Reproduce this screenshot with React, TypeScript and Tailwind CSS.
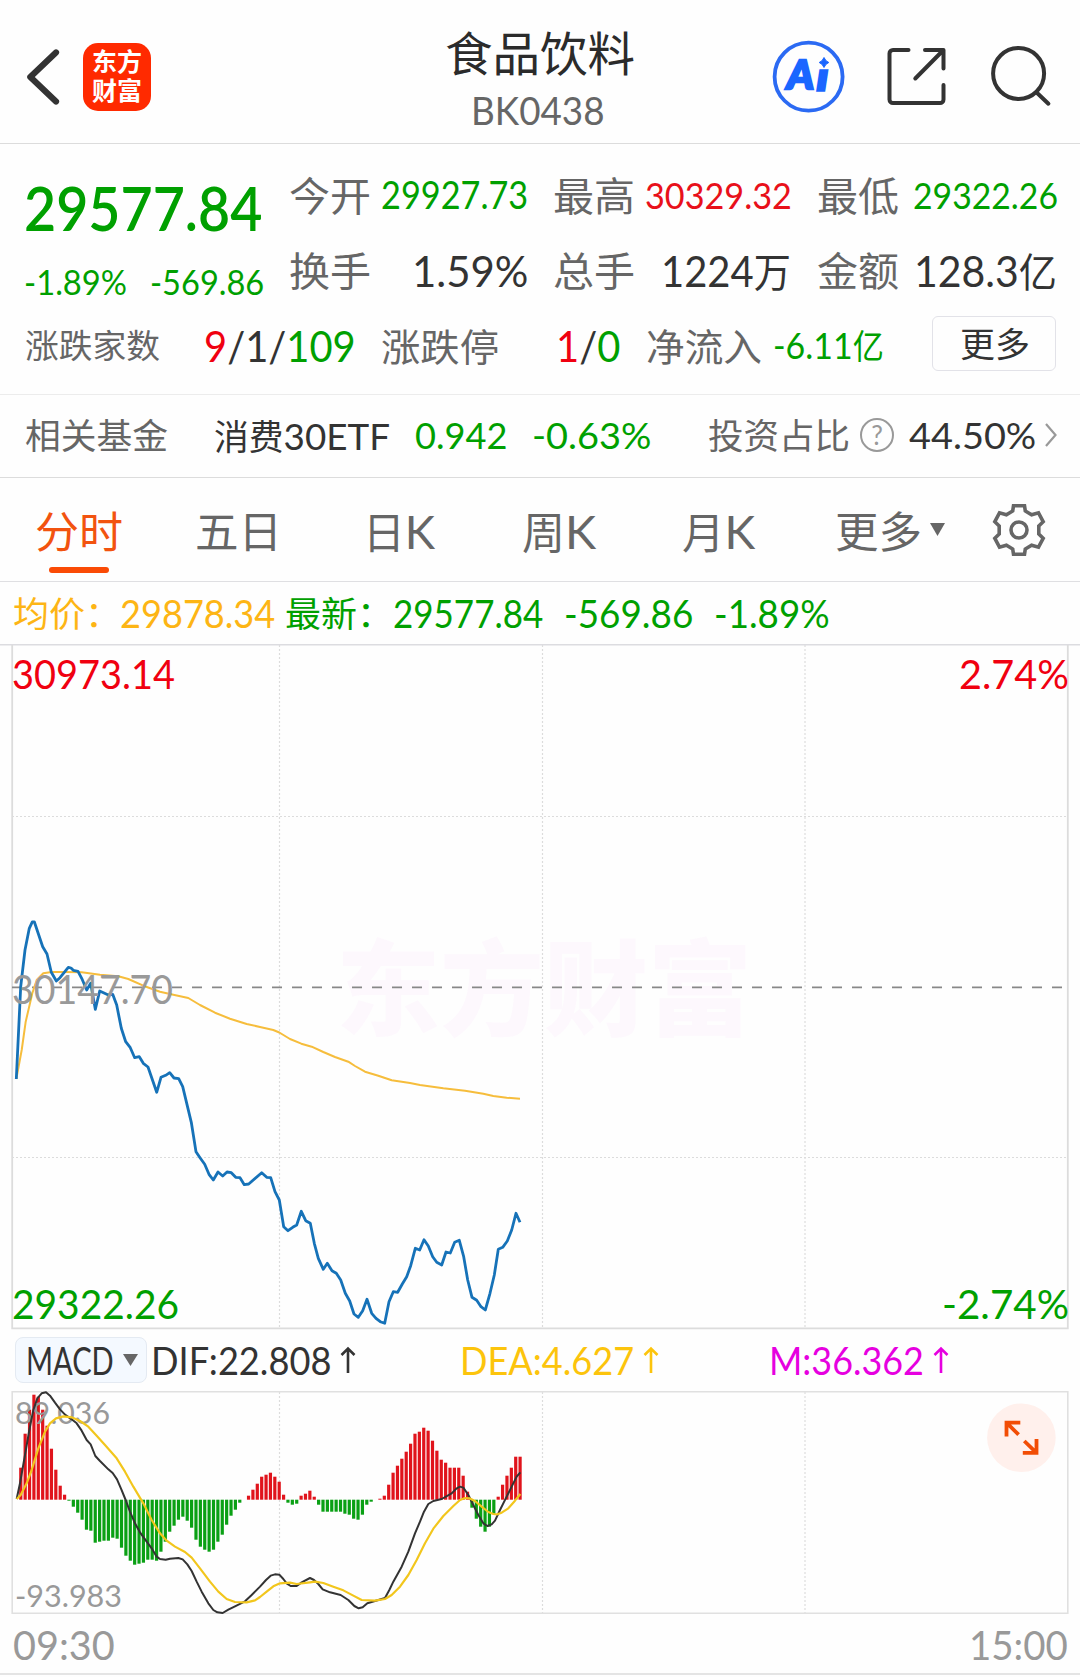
import { useLayoutEffect, useRef, useState } from 'react'
import type { ReactNode } from 'react'

// one value per minute bar, positive = red, negative = green
const macdBars = [
    0, 32, 66, 90, 105, 103, 90, 74, 51, 30, 14, 5, -1, -7, -13, -20, -30, -31, -43, -42, -41, -41, -38, -39,
    -48, -56, -61, -65, -64, -63, -60, -60, -61, -52, -42, -32, -26, -20, -17, -21, -28, -40, -47, -50, -52,
    -50, -42, -35, -25, -16, -10, -3, 0, 4, 10, 16, 23, 25, 27, 23, 18, 5, -3, -5, -4, 4, 6, 9, 3, -5, -12,
    -12, -12, -12, -12, -14, -15, -19, -20, -15, -5, -2, 0, 1, 4, 15, 27, 34, 41, 48, 56, 66, 68, 72, 69, 59,
    49, 40, 37, 32, 32, 32, 24, 8, -8, -19, -27, -32, -27, -14, 3, 15, 24, 32, 43, 43,
]

const priceLine =
    '16.3,1079 20.7,986.7 25,950 29.3,928.3 32.3,921.8 34.3,921.8 42.7,946.7 47,954 51.3,972.3 56.3,981 60,977.7 68.3,967.3 71,968 73.3,970.3 78,971.3 81.7,978.3 86.7,990 90.7,983.3 95.3,1009.3 99.7,991 108.3,995 112.7,994.3 116.7,1005 121.3,1028.3 125.7,1041.7 130.3,1047.7 134.7,1057.7 139.3,1056.7 143.3,1063.3 148,1067 156.7,1092.3 161,1077.3 165.7,1075.3 169.7,1072.7 174,1078 178.7,1078.7 182.7,1086.7 191.3,1122.3 196,1151.7 200,1157.7 204.7,1164.3 209,1174.3 213.3,1180 218,1172 222.7,1176 227,1172 231.3,1172.7 235.7,1177.3 240,1177.7 244.3,1184.7 248.7,1184 261.7,1172.7 266.7,1177.3 270.7,1177.7 275,1191.7 279.3,1200 283.7,1226.7 288,1230.7 292.7,1227.3 296.7,1225 301.3,1211.3 305.7,1220.7 310.3,1223.3 314.3,1243.3 318.3,1258.3 323.3,1269.3 327.3,1263.3 332,1270.7 336.3,1273.3 340.7,1280 345.3,1293.3 349.7,1301 354,1314 358.3,1317.3 362.7,1310.7 367,1299.3 371.7,1313.3 376,1318.3 380.3,1321.7 384.7,1323.3 389,1301.7 393.3,1291.7 397.7,1292.3 402.3,1284 406.7,1276.7 410.7,1265.7 415.3,1248.3 419.7,1250 424,1239.7 428.3,1246 432.7,1256.7 436.7,1262.3 441.7,1265 446,1252 450.3,1253 454.7,1242.3 459.3,1240.3 463.7,1256.7 467.7,1280 472,1297.3 476.7,1300.3 481,1306.7 485.3,1310 490,1293.3 494.3,1275 498.3,1249.3 502.7,1247.3 507.3,1241 511.7,1230 516,1213.3 520,1222.3'

const averageLine =
    '16.3,1079 21.7,1050 25.7,1021.7 32.3,993.3 36.7,980 43.3,973.3 51.7,972 63.3,972 81.7,972.3 100,974.7 118.3,976.3 128.3,979 143.3,985.7 160,991.7 173.3,994.7 188.3,998 200,1005 215,1012.7 230,1018.7 246.7,1024 260,1027 273.3,1030 279.3,1032.5 290,1039 301.3,1043.7 311.7,1046.7 323.3,1052 335,1057 348.3,1061.7 355,1066 365,1071.7 378.3,1075.7 391.7,1080.3 410,1083 420,1085 443.3,1088.3 465,1090.7 483.3,1093.7 493.3,1096 506.7,1097.7 520,1098.7'

const difLine =
    '50,357 60,310 75,225 88,150 100,90 112,55 125,40 138,37 150,47 165,68 180,88 195,104 215,118 230,130 245,152 260,180 272,193 286,228 300,243 325,268 338,279 351,298 364,328 377,360 390,395 405,430 420,457 440,485 455,505 470,530 480,537 497,539 510,536 535,534 548,538 562,553 575,573 590,605 605,635 625,670 640,690 652,697 668,699 685,689 705,679 735,664 755,645 780,620 798,600 812,587 825,583 838,584 850,597 860,610 872,618 890,618 905,607 930,594 942,600 955,612 968,628 990,637 1022,645 1045,660 1063,678 1076,685 1088,682 1102,670 1125,663 1155,654 1168,630 1180,605 1205,560 1225,515 1245,460 1260,425 1272,395 1285,372 1300,363 1325,357 1355,340 1370,325 1380,320 1390,323 1405,345 1420,375 1435,405 1450,430 1462,438 1475,433 1485,422 1500,390 1520,350 1535,320 1550,290 1561,277'

const deaLine =
    '50,357 62,345 80,310 95,270 115,205 135,155 150,130 168,115 190,109 215,112 240,123 265,140 290,167 315,195 350,235 375,275 400,320 430,370 455,420 480,460 500,482 525,500 555,516 575,533 600,565 630,605 655,635 680,657 705,666 740,667 765,661 780,651 800,635 820,619 840,610 870,608 890,612 930,607 945,605 970,609 1000,620 1030,631 1060,647 1085,660 1125,662 1155,657 1175,645 1200,620 1225,585 1250,540 1275,490 1300,446 1330,408 1360,378 1380,360 1395,354 1408,355 1425,363 1445,380 1465,396 1480,402 1492,403 1505,398 1525,385 1545,362 1561,342'

// Squeezes or stretches its text to the width of its own box
function Fit({ className, children }: { className: string; children: ReactNode }) {
    const box = useRef<HTMLSpanElement>(null)
    const text = useRef<HTMLSpanElement>(null)
    const [scale, setScale] = useState(1)

    useLayoutEffect(() => {
        if (box.current && text.current) {
            setScale(box.current.clientWidth / text.current.offsetWidth)
        }
    }, [children])

    return (
        <span ref={box} className={`block shrink-0 whitespace-nowrap leading-none ${className}`}>
            <span ref={text} className="inline-block origin-left" style={{ transform: `scaleX(${scale})` }}>
                {children}
            </span>
        </span>
    )
}

function Header() {
    return (
        <header className="grid h-[144px] grid-cols-[1fr_190px_1fr] border-b-[1.5px] border-[#dcdcdc]">
            <div className="flex items-center pt-2.5 pl-6">
                <svg width="36" height="60" viewBox="24 47 36 60" fill="none" stroke="#333" strokeWidth="6.2" strokeLinecap="round" strokeLinejoin="round">
                    <path d="M56 52.500 30.300 77l25.700 24.500" />
                </svg>
                <div className="ml-[23px] flex h-[68px] w-[68px] flex-col items-center justify-center rounded-[15px] bg-[#ff2a00] pb-px text-[25px] font-bold leading-[29px] text-white">
                    <span>东方</span>
                    <span>财富</span>
                </div>
            </div>
            <div className="flex flex-col items-center pt-[30px]">
                <Fit className="w-[190px] text-[47px] text-[#2b2b2b]">食品饮料</Fit>
                <Fit className="mt-[14px] mr-[5px] w-[134px] text-[39px] text-[#666]">BK0438</Fit>
            </div>
            <svg className="ml-auto" width="310" height="143" viewBox="770 0 310 143" fill="none">
                <circle cx="808.600" cy="76.700" r="34" stroke="#2b6af3" strokeWidth="3.800" />
                <g fill="#1a66ff" stroke="#1a66ff" fontFamily="Lato" fontWeight="900" fontStyle="italic" fontSize="40">
                    <text x="787" y="89" textLength="27" lengthAdjust="spacingAndGlyphs" strokeWidth="2.400">A</text>
                    <text x="816" y="91" textLength="13" lengthAdjust="spacingAndGlyphs" strokeWidth="1.600">ı</text>
                    <path d="M824 57.500q1.500 3.800 4.800 5-3.300 1.200-4.800 5-1.500-3.800-4.800-5 3.300-1.200 4.800-5Z" />
                </g>
                <g stroke="#333" strokeWidth="4" strokeLinecap="round" strokeLinejoin="round">
                    <path d="M908.500 50H893a3.500 3.500 0 0 0-3.500 3.500V99.500a3.500 3.500 0 0 0 3.500 3.500H940a3.500 3.500 0 0 0 3.500-3.500V85" />
                    <path d="M925 50h18.500v18.500M943 50.500 915.300 78.500" />
                    <circle cx="1018.600" cy="73.500" r="25.500" />
                    <path d="m1036.900 92.700 11.500 11" />
                </g>
            </svg>
        </header>
    )
}

function Quote() {
    return (
        <section className="h-[251px] border-b border-[#ececec] pt-[14px] text-[#333]">
            <div className="flex">
                <div className="w-[289px] pl-[24px] text-[#00a000]">
                    <div className="flex h-[97px] items-center">
                        <Fit className="w-[238px] text-[62px] font-semibold">29577.84</Fit>
                    </div>
                    <div className="flex h-[54px] items-center">
                        <Fit className="w-[103px] text-[34px]">-1.89%</Fit>
                        <Fit className="ml-[23px] w-[114px] text-[34px]">-569.86</Fit>
                    </div>
                </div>
                <div>
                    <div className="flex h-[75px] items-center">
                        <Fit className="w-[82px] text-[40px] text-[#666]">今开</Fit>
                        <Fit className="mb-[3px] ml-[10px] w-[147px] text-[38px] text-[#00a000]">29927.73</Fit>
                        <Fit className="ml-[25px] w-[82px] text-[40px] text-[#666]">最高</Fit>
                        <Fit className="mb-[2px] ml-[10px] w-[147px] text-[37px] text-[#e8101a]">30329.32</Fit>
                        <Fit className="ml-[25px] w-[82px] text-[40px] text-[#666]">最低</Fit>
                        <Fit className="mb-[2px] ml-[14px] w-[145px] text-[37px] text-[#00a000]">29322.26</Fit>
                    </div>
                    <div className="flex h-[75px] items-center">
                        <Fit className="w-[82px] text-[40px] text-[#666]">换手</Fit>
                        <Fit className="ml-[41px] w-[116px] text-[43px]">1.59%</Fit>
                        <Fit className="ml-[25px] w-[82px] text-[40px] text-[#666]">总手</Fit>
                        <Fit className="ml-[26px] w-[130px] text-[43px]">1224<span className="text-[40px]">万</span></Fit>
                        <Fit className="ml-[26px] w-[82px] text-[40px] text-[#666]">金额</Fit>
                        <Fit className="ml-[15px] w-[143px] text-[43px]">128.3<span className="text-[40px]">亿</span></Fit>
                    </div>
                </div>
            </div>
            <div className="-mt-px flex h-[75px] items-center pl-[25px]">
                <Fit className="w-[135px] text-[33px] text-[#666]">涨跌家数</Fit>
                <Fit className="ml-[44px] w-[152px] text-[43px]">
                    <span className="text-[#f00010]">9</span>/1/<span className="text-[#00a000]">109</span>
                </Fit>
                <Fit className="ml-[25px] w-[118px] text-[38px] text-[#666]">涨跌停</Fit>
                <Fit className="ml-[57px] w-[64px] text-[43px]">
                    <span className="text-[#f00010]">1</span>/<span className="text-[#00a000]">0</span>
                </Fit>
                <Fit className="ml-[26px] w-[116px] text-[38px] text-[#666]">净流入</Fit>
                <Fit className="mb-[2px] ml-[11px] w-[111px] text-[37px] text-[#00a000]">-6.11<span className="text-[34px]">亿</span></Fit>
                <button className="mb-1 ml-[48px] flex h-[55px] w-[124px] items-center justify-center rounded-md border border-[#e2e2e8]">
                    <Fit className="w-[70px] text-[34px]">更多</Fit>
                </button>
            </div>
        </section>
    )
}

function FundRow() {
    return (
        <section className="flex h-[83px] items-center border-b-[1.5px] border-[#dcdcdc] pb-[2px] pl-[25px] text-[#333]">
            <Fit className="w-[143px] text-[35px] text-[#666]">相关基金</Fit>
            <Fit className="ml-[46px] w-[176px] text-[35px]">消费<span className="text-[37px]">30ETF</span></Fit>
            <Fit className="mb-[2px] ml-[25px] w-[93px] text-[37px] text-[#00a000]">0.942</Fit>
            <Fit className="mb-[2px] ml-[24px] w-[120px] text-[37px] text-[#00a000]">-0.63%</Fit>
            <Fit className="ml-[56px] w-[142px] text-[35px] text-[#666]">投资占比</Fit>
            <div className="ml-[10px] flex h-[34px] w-[34px] items-center justify-center rounded-full border-[2.5px] border-[#999] text-[26px] leading-none text-[#999]">?</div>
            <Fit className="mb-[2px] ml-[15px] w-[127px] text-[37px]">44.50%</Fit>
            <svg className="ml-[8px]" width="14" height="26" viewBox="0 0 14 26" fill="none" stroke="#999" strokeWidth="2.2">
                <path d="m2 2 9.500 11L2 24" />
            </svg>
        </section>
    )
}

function Tabs() {
    return (
        <nav className="flex h-[104px] items-center border-b-[1.5px] border-[#dfdfe2] pt-[3px] pl-[35px] text-[43px] text-[#666]">
            <div className="relative text-[#f2530f]">
                <Fit className="w-[88px]">分时</Fit>
                <span className="absolute top-[57px] left-[14px] h-[6px] w-[60px] rounded-full bg-[#fa4b05]" />
            </div>
            <Fit className="ml-[72px] w-[87px]">五日</Fit>
            <Fit className="ml-[81px] w-[72px]">日<span className="text-[47px]">K</span></Fit>
            <Fit className="ml-[87px] w-[74px]">周<span className="text-[47px]">K</span></Fit>
            <Fit className="ml-[86px] w-[73px]">月<span className="text-[47px]">K</span></Fit>
            <Fit className="ml-[80px] w-[87px]">更多</Fit>
            <svg className="mb-[3px] ml-[8px]" width="15" height="13" viewBox="0 0 15 13" fill="#666">
                <path d="M0 0h15L7.500 13Z" />
            </svg>
            <svg className="mb-[3px] ml-[47px]" width="54" height="54" viewBox="-27 -27 54 54" fill="none" stroke="#666" strokeWidth="3.600">
                <path d="M-5.500-24.300H5.500L6.300-19 12.600-15.200 19.500-17.200 24.200-8.300 19.800-4V4L24.200 8.300 19.500 17.200 12.600 15.200 6.300 19 5.500 24.300H-5.500L-6.300 19-12.600 15.200-19.500 17.200-24.200 8.300-19.800 4V-4L-24.200-8.300-19.500-17.200-12.600-15.200-6.300-19Z" />
                <circle r="8" />
            </svg>
        </nav>
    )
}

function PriceInfo() {
    return (
        <div className="flex h-[62px] items-center pl-[13px] text-[38px] text-[#00a000]">
            <Fit className="w-[108px] text-[35px] text-[#fdb515]">均价：</Fit>
            <Fit className="-ml-px w-[155px] text-[#fdb515]">29878.34</Fit>
            <Fit className="ml-[10px] w-[108px] text-[35px]">最新：</Fit>
            <Fit className="w-[150px]">29577.84</Fit>
            <Fit className="ml-[21px] w-[129px]">-569.86</Fit>
            <Fit className="ml-[21px] w-[116px]">-1.89%</Fit>
        </div>
    )
}

function PriceChart() {
    return (
        <svg className="block" width="1080" height="686" viewBox="0 644 1080 686" fill="none">
            <text x="336" y="1028" fill="#fdf8fd" fontSize="104" fontWeight="900" textLength="416">东方财富</text>
            <g stroke="#dcdcdc" strokeWidth="1.200" strokeDasharray="2 2">
                <path d="M279.500 645V1328M542.500 645V1328M805 645V1328" />
                <path d="M12 816.500H1068M12 1157.500H1068" />
            </g>
            <path d="M0 644.800H1080" stroke="#dcdce0" strokeWidth="1.500" />
            <path d="M12.200 645V1328.300H1067.800V645" stroke="#dcdcdc" strokeWidth="1.800" />
            <path d="M12 987.300H1064" stroke="#888" strokeWidth="1.800" strokeDasharray="10 10" />
            <polyline points={averageLine} stroke="#f6bd3c" strokeWidth="2" strokeLinejoin="round" />
            <polyline points={priceLine} stroke="#1672b8" strokeWidth="2.800" strokeLinejoin="round" />
            <g fontSize="40">
                <text x="12" y="689" fill="#f00010" textLength="163" lengthAdjust="spacingAndGlyphs">30973.14</text>
                <text x="959" y="689" fill="#f00010" textLength="110" lengthAdjust="spacingAndGlyphs">2.74%</text>
                <text x="12" y="1003.500" fill="#999" textLength="161" lengthAdjust="spacingAndGlyphs">30147.70</text>
                <text x="12" y="1319" fill="#00a000" textLength="167" lengthAdjust="spacingAndGlyphs">29322.26</text>
                <text x="942" y="1319" fill="#00a000" textLength="127" lengthAdjust="spacingAndGlyphs">-2.74%</text>
            </g>
        </svg>
    )
}

function UpArrow() {
    return (
        <svg className="ml-[9px] shrink-0" width="16" height="28" viewBox="0 0 16 28" fill="none" stroke="currentColor" strokeWidth="2.600">
            <path d="M8 27V2M1.500 9 8 2.500 14.500 9" />
        </svg>
    )
}

function MacdHeader() {
    return (
        <div className="flex h-[60px] items-center pl-[15px] text-[38px] text-[#333]">
            <div className="flex h-[46px] w-[132px] items-center rounded-lg border border-[#e4eaf2] bg-[#f4f9ff] pl-[10px]">
                <Fit className="w-[88px]">MACD</Fit>
                <svg className="ml-[9px]" width="15" height="12" viewBox="0 0 15 12" fill="#666">
                    <path d="M0 0h15L7.500 12Z" />
                </svg>
            </div>
            <div className="ml-[4px] flex w-[309px] items-center">
                <Fit className="w-[180px]">DIF:22.808</Fit>
                <UpArrow />
            </div>
            <div className="flex w-[309px] items-center text-[#fcc40c]">
                <Fit className="w-[174px]">DEA:4.627</Fit>
                <UpArrow />
            </div>
            <div className="flex items-center text-[#e600e0]">
                <Fit className="w-[155px]">M:36.362</Fit>
                <UpArrow />
            </div>
        </div>
    )
}

function MacdChart() {
    return (
        <svg className="block" width="1080" height="227" viewBox="0 1390 1080 227" fill="none">
            <path d="M279.500 1392V1613M542.500 1392V1613M805 1392V1613" stroke="#dcdcdc" strokeWidth="1.200" strokeDasharray="2 2" />
            <path d="M12.200 1391.800H1067.800V1613.300H12.200Z" stroke="#e0e0e0" strokeWidth="1.600" />
            {macdBars.map((v, i) => (
                <rect
                    key={i}
                    x={16.3 + i * 4.38 - 1.5}
                    y={v > 0 ? 1499.7 - v : 1499.7}
                    width="3.200"
                    height={Math.abs(v)}
                    fill={v > 0 ? '#e0141c' : '#0aa014'}
                />
            ))}
            <g fill="#999" fontSize="31">
                <text x="15" y="1424.300" textLength="95" lengthAdjust="spacingAndGlyphs">89.036</text>
                <text x="15" y="1606.500" textLength="107" lengthAdjust="spacingAndGlyphs">-93.983</text>
            </g>
            <g transform="translate(0 1380) scale(0.33333)" strokeWidth="6" strokeLinejoin="round">
                <polyline points={difLine} stroke="#333" />
                <polyline points={deaLine} stroke="#f2c61c" strokeWidth="6.500" />
            </g>
            <circle cx="1021.400" cy="1437.700" r="34.300" fill="#fff0ec" />
            <g stroke="#f24d05" strokeWidth="3.800">
                <path d="M1006.500 1436.500V1422.700H1020.300M1006.500 1422.700 1018.600 1434.700" />
                <path d="M1036.500 1439V1452.800H1022.800M1036.500 1452.800 1024.300 1441" />
            </g>
        </svg>
    )
}

export default function App() {
    return (
        <div className="h-[1677px] w-[1080px] overflow-hidden bg-[#fefefe] font-['Lato','Noto_Sans_CJK_SC',sans-serif]">
            <Header />
            <Quote />
            <FundRow />
            <Tabs />
            <PriceInfo />
            <PriceChart />
            <MacdHeader />
            <MacdChart />
            <footer className="flex h-[58px] items-center justify-between border-b-2 border-[#e4e4e4] pr-[12px] pl-[13px] text-[40px] text-[#999]">
                <Fit className="w-[102px]">09:30</Fit>
                <Fit className="w-[99px]">15:00</Fit>
            </footer>
        </div>
    )
}
